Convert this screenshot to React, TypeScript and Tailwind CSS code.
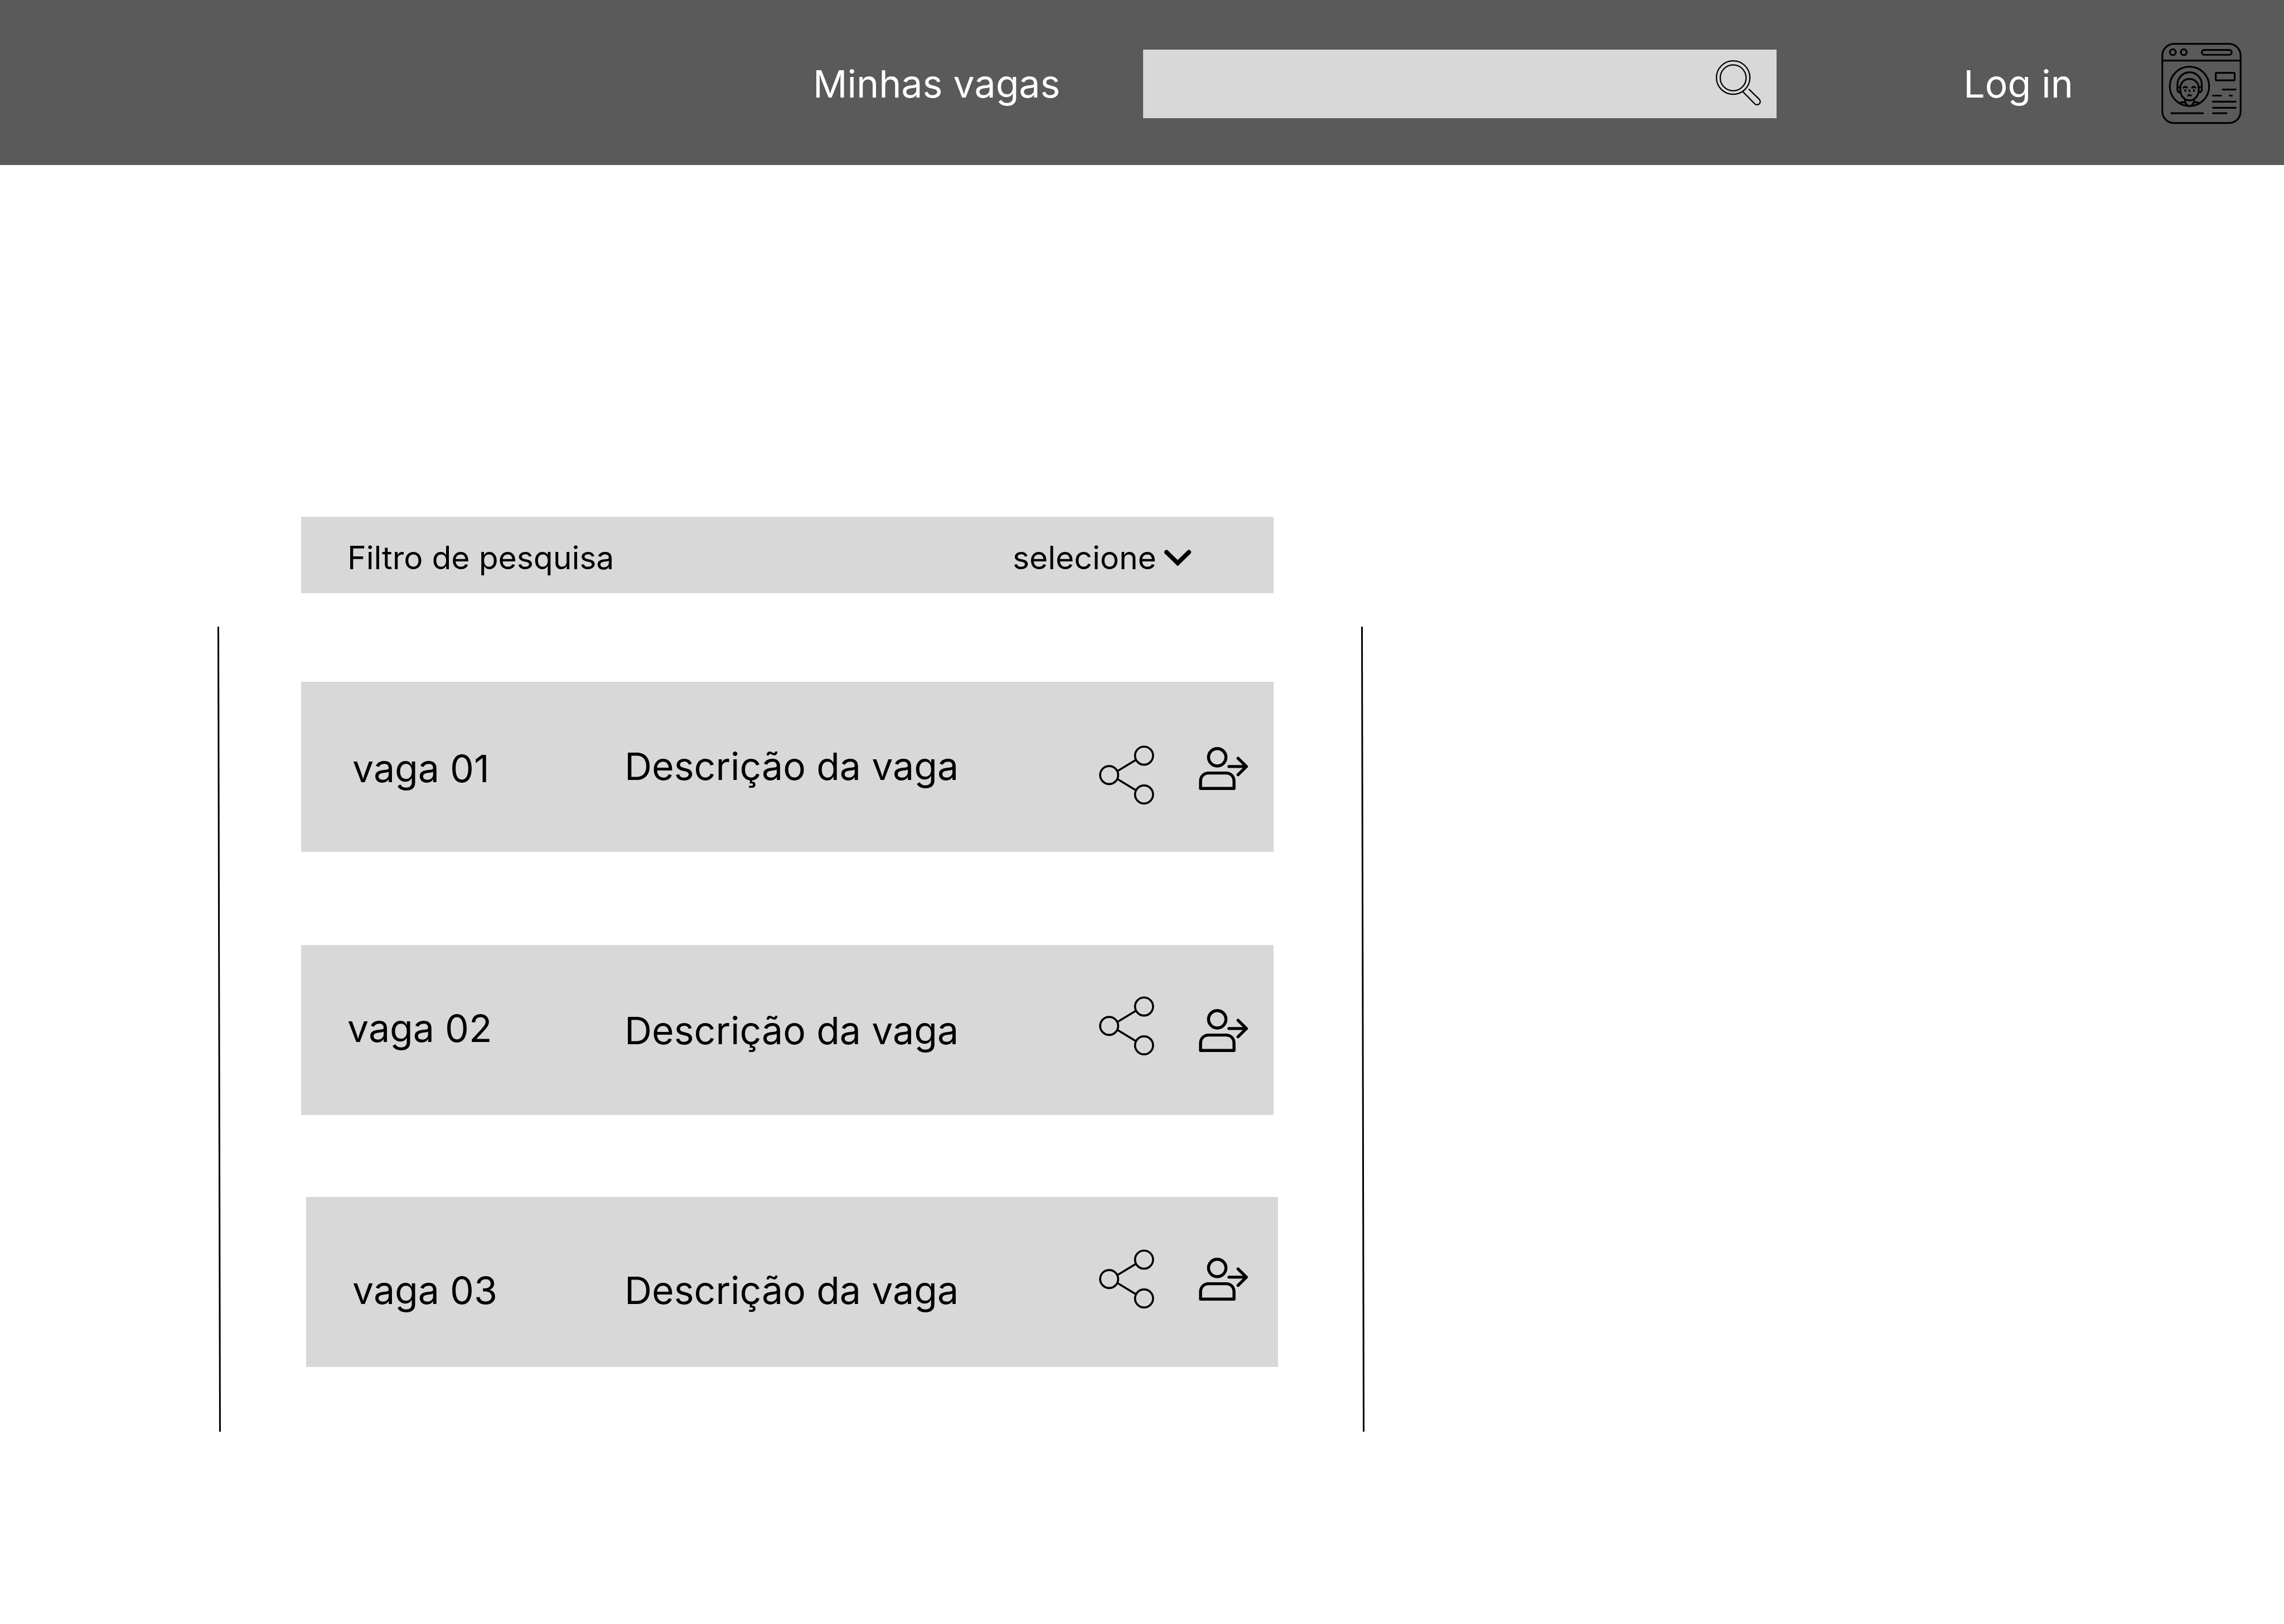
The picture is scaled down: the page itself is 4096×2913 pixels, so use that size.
type Job = {
  id: string;
  name: string;
  description: string;
  cardClass: string;
  nameClass: string;
  descriptionClass: string;
  shareClass: string;
  applyClass: string;
};

const jobs: Job[] = [
  {
    id: "01",
    name: "vaga 01",
    description: "Descrição da vaga",
    cardClass: "pl-[92px] pr-[46px]",
    nameClass: "w-[488px] pt-1",
    descriptionClass: "pb-1",
    shareClass: "pt-7",
    applyClass: "pt-1.5",
  },
  {
    id: "02",
    name: "vaga 02",
    description: "Descrição da vaga",
    cardClass: "mt-[167px] pl-[83px] pr-[46px]",
    nameClass: "w-[497px] pb-2",
    descriptionClass: "",
    shareClass: "pb-4",
    applyClass: "pt-0.5",
  },
  {
    id: "03",
    name: "vaga 03",
    description: "Descrição da vaga",
    cardClass: "mt-[147px] ml-[9px] -mr-2 pl-[83px] pr-[54px]",
    nameClass: "w-[488px] pt-7",
    descriptionClass: "pt-7",
    shareClass: "pb-3",
    applyClass: "pb-2.5",
  },
];

function SearchIcon() {
  return (
    <svg viewBox="142 141 356 356" className="size-[81px]" fill="none" stroke="black" strokeWidth="10" strokeLinecap="round" aria-hidden="true">
      <circle cx="279" cy="278" r="132" />
      <circle cx="279" cy="280" r="102" />
      <path d="M356 390L449 485A25 25 0 0 0 485 449L405 371" />
    </svg>
  );
}

function ProfileIcon() {
  return (
    <svg viewBox="76 68 703 703" className="size-40" fill="none" stroke="black" strokeWidth="14" strokeLinecap="round" strokeLinejoin="round" aria-hidden="true">
      <rect x="119" y="106" width="617" height="624" rx="92" />
      <path d="M119 238H736" />
      <circle cx="202" cy="172" r="23" />
      <circle cx="288" cy="172" r="23" />
      <rect x="430" y="154" width="236" height="38" rx="19" />
      <circle cx="333" cy="441" r="155" />
      <path d="M238 448V428A96 98 0 0 1 430 428V448" />
      <path d="M258 448H238V465C238 478 246 487 257 488M409 448H430V465C430 478 422 487 411 488" />
      <path d="M261 455C261 412 292 383 333 383S406 412 406 455V470C406 515 374 552 333 552S261 515 261 470Z" />
      <path d="M298 550V568L322 596M369 550V568L345 596" />
      <path d="M255 572C270 566 285 565 300 567M411 572C396 566 380 565 366 567" />
      <path d="M286 451C292 443 308 443 314 451M353 451C359 443 375 443 381 451" />
      <path d="M333 471V480M322 514C326 507 340 507 345 514" />
      <circle cx="300" cy="474" r="9" fill="black" stroke="none" />
      <circle cx="368" cy="474" r="9" fill="black" stroke="none" />
      <rect x="540" y="334" width="149" height="60" rx="6" />
      <path d="M595 466H697M518 514H582M649 514H668M518 562H697M518 610H697M518 653H625M190 653H440" />
    </svg>
  );
}

function ShareIcon() {
  return (
    <svg viewBox="113 174 434 466" className="h-[106px] w-[99px]" fill="none" stroke="black" strokeWidth="16" aria-hidden="true">
      <circle cx="192" cy="408" r="71" />
      <circle cx="467" cy="255" r="71" />
      <circle cx="467" cy="561" r="71" />
      <path d="M258 376L402 289M258 440L402 527" />
    </svg>
  );
}

function ApplyIcon() {
  return (
    <svg viewBox="899 188 388 340" className="h-[77px] w-[88px]" fill="none" stroke="black" strokeWidth="24" strokeLinecap="round" strokeLinejoin="round" aria-hidden="true">
      <circle cx="1044" cy="269" r="69" />
      <path d="M912 516V457C912 420 940 394 976 394H1114C1150 394 1177 420 1177 457V516Z" />
      <path d="M1137 342H1275M1209 277L1275 342L1209 407" />
    </svg>
  );
}

function ChevronIcon() {
  return (
    <svg viewBox="0 0 48 30" className="pointer-events-none h-[30px] w-12" fill="none" stroke="black" strokeWidth="8" strokeLinecap="round" aria-hidden="true">
      <path d="M4 4.5L24 24L44 4.5" />
    </svg>
  );
}

function SideRule() {
  return (
    <svg viewBox="0 0 6 100" preserveAspectRatio="none" className="w-1.5 shrink-0 self-stretch" aria-hidden="true">
      <path d="M1.5 0L4.5 100" stroke="black" strokeWidth="3" vectorEffect="non-scaling-stroke" />
    </svg>
  );
}

function JobCard({ job }: { job: Job }) {
  return (
    <li className={`flex h-[305px] items-center bg-[#d8d8d8] ${job.cardClass}`}>
      <h2 className={`shrink-0 ${job.nameClass}`}>{job.name}</h2>
      <p className={`flex-1 ${job.descriptionClass}`}>{job.description}</p>
      <div className="flex items-center gap-20">
        <button type="button" aria-label={`Compartilhar vaga ${job.id}`} className={job.shareClass}>
          <ShareIcon />
        </button>
        <button type="button" aria-label={`Candidatar-se à vaga ${job.id}`} className={job.applyClass}>
          <ApplyIcon />
        </button>
      </div>
    </li>
  );
}

export default function App() {
  return (
    <div className="min-h-screen bg-white font-['Inter',sans-serif] text-[68px] leading-[82px] text-black">
      <header className="flex h-[296px] items-center justify-end bg-[#5a5a5a] pt-1 pr-[68px] text-white">
        <a href="#vagas" className="whitespace-nowrap">Minhas vagas</a>
        <form role="search" className="ml-[149px] flex h-[123px] w-[28.2%] items-center bg-[#d8d8d8] pr-7 pb-1 pl-8 text-black">
          <input type="search" aria-label="Pesquisar vagas" className="min-w-0 flex-1 bg-transparent outline-none" />
          <button type="button" aria-label="Pesquisar">
            <SearchIcon />
          </button>
        </form>
        <a href="#login" className="ml-[335px] whitespace-nowrap">Log in</a>
        <a href="#perfil" aria-label="Perfil" className="ml-[150px]">
          <ProfileIcon />
        </a>
      </header>

      <main id="vagas" className="ml-[390px] w-[50.22%] pt-[631px]">
        <div className="mr-[163px] ml-[150px] flex h-[137px] items-center justify-between bg-[#d8d8d8] pt-2.5 pr-[148px] pl-[83px] text-[57px] leading-[69px]">
          <label htmlFor="filtro">Filtro de pesquisa</label>
          <div className="flex items-center gap-[14px]">
            <select id="filtro" className="appearance-none bg-transparent outline-none">
              <option>selecione</option>
            </select>
            <ChevronIcon />
          </div>
        </div>

        <div className="mt-[60px] flex">
          <SideRule />
          <ul className="flex-1 pt-[99px] pr-[157px] pb-[116px] pl-36">
            {jobs.map((job) => (
              <JobCard key={job.id} job={job} />
            ))}
          </ul>
          <SideRule />
        </div>
      </main>
    </div>
  );
}
